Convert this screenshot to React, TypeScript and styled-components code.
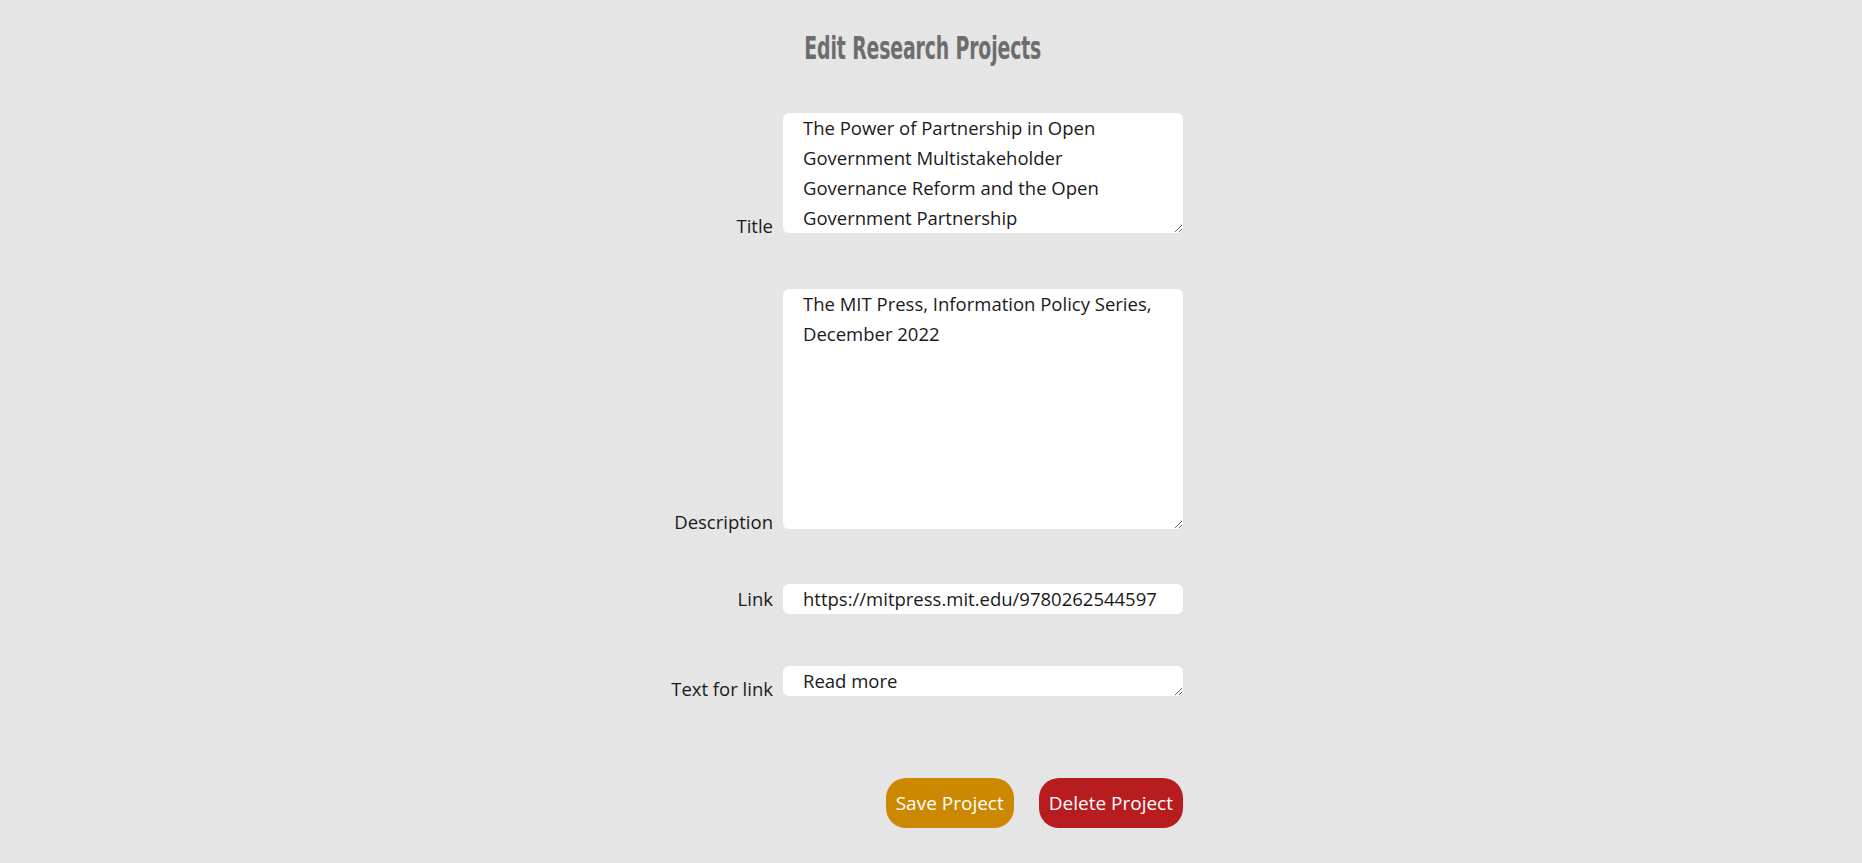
import React from "react";
import styled, { createGlobalStyle } from "styled-components";

const GlobalStyle = createGlobalStyle`
  html, body {
    margin: 0;
    padding: 0;
    background: #e5e5e5;
  }
  body {
    font-family: "Open Sans", "Noto Sans", sans-serif;
    color: #1a1a1a;
  }
`;

const Page = styled.main`
  min-height: 863px;
  padding-top: 28px;
  box-sizing: border-box;
`;

const Heading = styled.h1`
  margin: 0 0 45px;
  padding-right: 17px;
  text-align: center;
  font-family: "DejaVu Sans Condensed", "DejaVu Sans", sans-serif;
  font-weight: 700;
  font-size: 32px;
  line-height: 40px;
  color: #6d6d6d;
`;

const HeadingText = styled.span`
  display: inline-block;
  transform: scaleX(0.655);
  transform-origin: center;
  letter-spacing: -0.2px;
`;

const Form = styled.form`
  width: 504px;
  margin: 0 auto;
`;

const Row = styled.div<{ $gap: number }>`
  display: block;
  white-space: nowrap;
  font-size: 18.5px;
  margin-bottom: ${(p) => p.$gap}px;
`;

const Label = styled.label`
  display: inline-block;
  width: 94px;
  margin-right: 10px;
  direction: rtl;
  text-align: right;
  font-size: 18.5px;
  color: #1a1a1a;
`;

const fieldBase = `
  box-sizing: border-box;
  width: 400px;
  border: none;
  outline: none;
  border-radius: 6px;
  background: #ffffff;
  padding: 0 20px;
  font-family: "Open Sans", "Noto Sans", sans-serif;
  font-size: 18.5px;
  line-height: 30px;
  color: #1a1a1a;
`;

const TextArea = styled.textarea<{ $h: number }>`
  ${fieldBase}
  height: ${(p) => p.$h}px;
  resize: vertical;
  white-space: pre-wrap;
  overflow: hidden;
  vertical-align: baseline;
`;

const Input = styled.input`
  ${fieldBase}
  height: 30px;
`;

const Actions = styled.div`
  display: flex;
  justify-content: flex-end;
  gap: 25px;
`;

const Button = styled.button<{ $bg: string }>`
  height: 50px;
  padding: 0 10px;
  border: none;
  border-radius: 20px;
  background: ${(p) => p.$bg};
  color: #ffffff;
  font-family: "Open Sans", "Noto Sans", sans-serif;
  font-size: 19px;
  cursor: pointer;
`;

export default function App() {
  return (
    <>
      <GlobalStyle />
      <Page>
        <Heading>
          <HeadingText>Edit Research Projects</HeadingText>
        </Heading>
        <Form onSubmit={(e) => e.preventDefault()}>
          <Row $gap={51}>
            <Label htmlFor="title">Title</Label>
            <TextArea
              id="title"
              $h={120}
              defaultValue="The Power of Partnership in Open Government Multistakeholder Governance Reform and the Open Government Partnership"
            />
          </Row>
          <Row $gap={50}>
            <Label htmlFor="desc">Description</Label>
            <TextArea
              id="desc"
              $h={240}
              defaultValue="The MIT Press, Information Policy Series, December 2022"
            />
          </Row>
          <Row $gap={52}>
            <Label htmlFor="link">Link</Label>
            <Input id="link" defaultValue="https://mitpress.mit.edu/9780262544597" />
          </Row>
          <Row $gap={77}>
            <Label htmlFor="linktext">Text for link</Label>
            <TextArea id="linktext" $h={30} defaultValue="Read more" />
          </Row>
          <Actions>
            <Button type="submit" $bg="#cc8800">Save Project</Button>
            <Button type="button" $bg="#b71c1f">Delete Project</Button>
          </Actions>
        </Form>
      </Page>
    </>
  );
}
